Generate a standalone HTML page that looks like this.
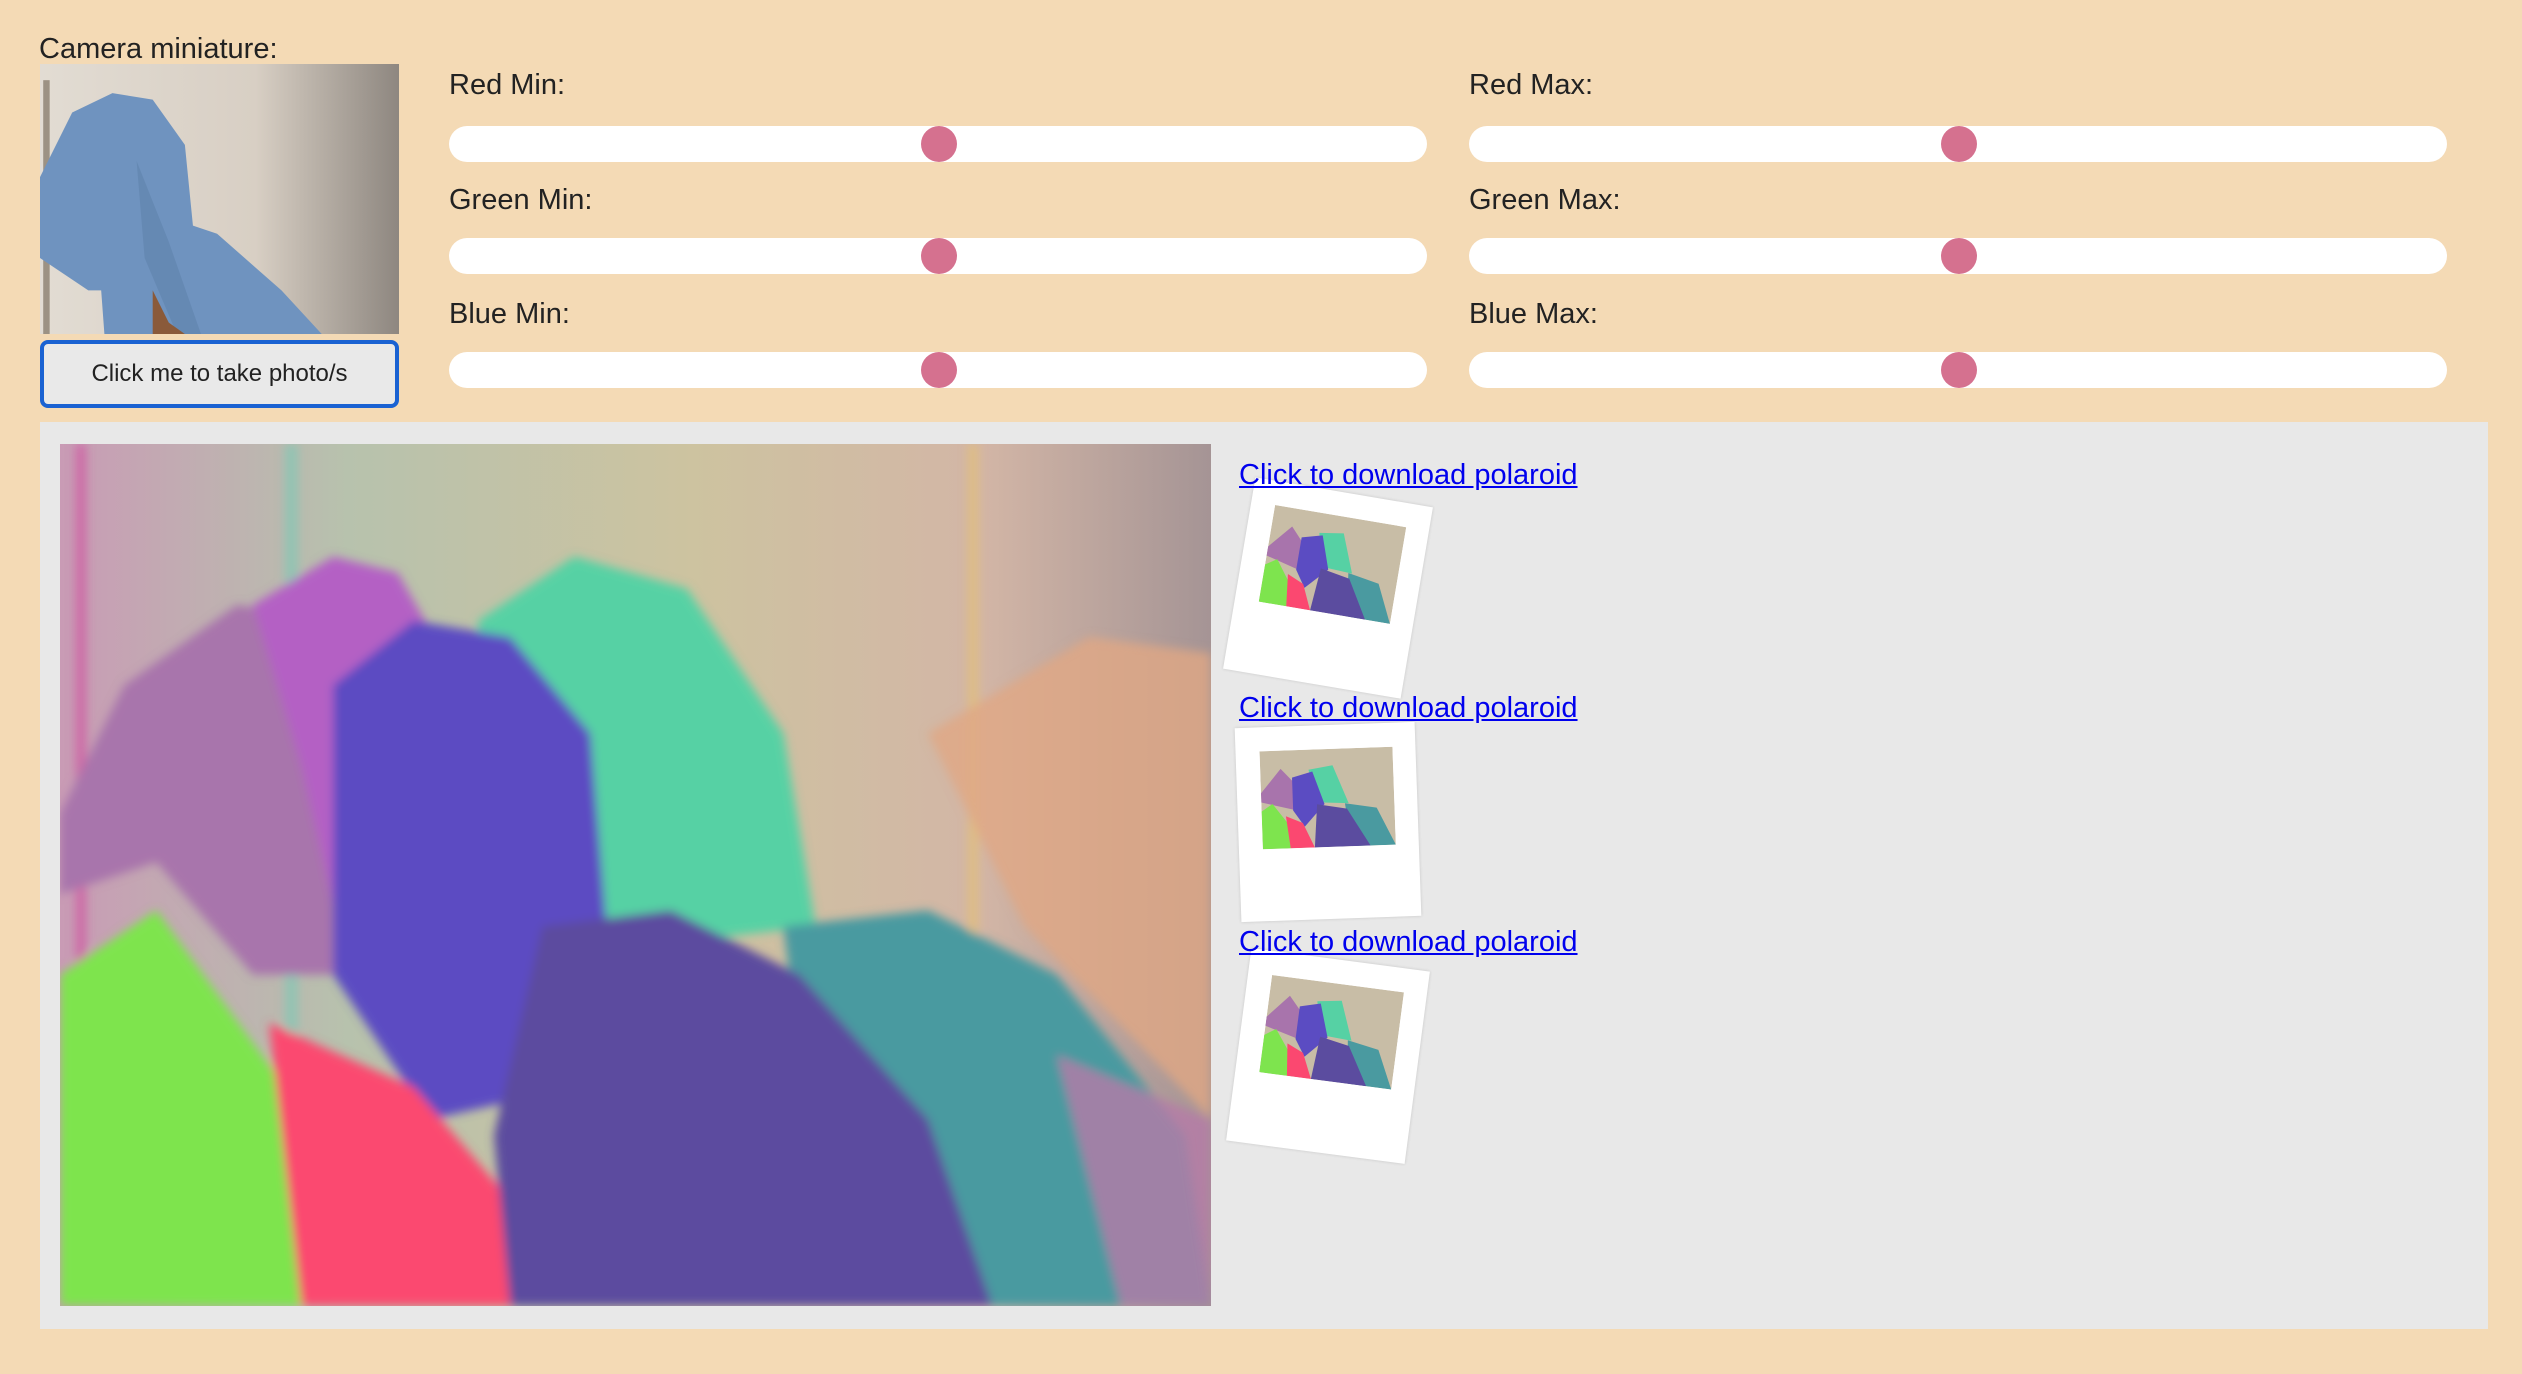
<!DOCTYPE html>
<html><head><meta charset="utf-8">
<style>
*{margin:0;padding:0;box-sizing:border-box}
html,body{width:2522px;height:1374px;overflow:hidden;background:#f4dab5;font-family:"Liberation Sans",Arial,sans-serif;color:#222}
.lbl{position:absolute;font-size:29px;line-height:29px;white-space:nowrap}
.track{position:absolute;height:36px;width:978px;background:#fff;border-radius:18px}
.thumb{position:absolute;width:36px;height:36px;border-radius:50%;background:#d5718f;top:0}
.thumbimg{position:absolute;left:40px;top:64px;width:359px;height:270px}
.btn{position:absolute;left:40px;top:340px;width:359px;height:68px;background:#e9e9e9;border:4px solid #1a62d2;border-radius:8px;font-size:24px;text-align:center;line-height:60px;color:#222}
.panel{position:absolute;left:40px;top:422px;width:2448px;height:907px;background:#e8e8e8}
.big{position:absolute;left:60px;top:444px;width:1151px;height:862px}
svg{display:block}
.link{position:absolute;left:1239px;font-size:29px;line-height:29px;color:#0000ee;text-decoration:underline;white-space:nowrap}
.pol{position:absolute;width:180px;height:194px;background:#fff;box-shadow:0 0 3px rgba(0,0,0,.15)}
.pol .in{position:absolute;left:24px;top:24px;width:133px;height:98px}
</style></head><body>
<div class="lbl" style="left:39px;top:35px">Camera miniature:</div>
<svg class="thumbimg" viewBox="0 0 223 167" preserveAspectRatio="none">
<defs><linearGradient id="w" x1="0" x2="1"><stop offset="0" stop-color="#e2dcd3"/><stop offset=".6" stop-color="#d8cfc4"/><stop offset="1" stop-color="#8e8780"/></linearGradient></defs>
<rect width="223" height="167" fill="url(#w)"/>
<rect x="2" y="10" width="4" height="157" fill="#9c9284"/>
<path d="M0,70 L20,30 L45,18 L70,22 L90,50 L95,100 L110,105 L150,140 L175,167 L40,167 L38,140 L30,140 L0,120Z" fill="#6f93bf"/>
<path d="M60,60 L80,110 L100,167 L85,167 L65,120Z" fill="#5f82ac" opacity=".6"/>
<path d="M70,140 L80,160 L90,167 L70,167Z" fill="#8a5a3a"/>
</svg>
<div class="btn">Click me to take photo/s</div>

<div class="lbl" style="left:449px;top:71px">Red Min:</div>
<div class="track" style="left:449px;top:126px"><div class="thumb" style="left:472px"></div></div>
<div class="lbl" style="left:1469px;top:71px">Red Max:</div>
<div class="track" style="left:1469px;top:126px"><div class="thumb" style="left:472px"></div></div>
<div class="lbl" style="left:449px;top:186px">Green Min:</div>
<div class="track" style="left:449px;top:238px"><div class="thumb" style="left:472px"></div></div>
<div class="lbl" style="left:1469px;top:186px">Green Max:</div>
<div class="track" style="left:1469px;top:238px"><div class="thumb" style="left:472px"></div></div>
<div class="lbl" style="left:449px;top:300px">Blue Min:</div>
<div class="track" style="left:449px;top:352px"><div class="thumb" style="left:472px"></div></div>
<div class="lbl" style="left:1469px;top:300px">Blue Max:</div>
<div class="track" style="left:1469px;top:352px"><div class="thumb" style="left:472px"></div></div>

<div class="panel"></div>
<svg class="big" viewBox="0 0 716 536" preserveAspectRatio="none">
<defs>
<linearGradient id="bg" x1="0" x2="1"><stop offset="0" stop-color="#c99bb5"/><stop offset=".25" stop-color="#b7c2ad"/><stop offset=".55" stop-color="#cdc3a0"/><stop offset=".8" stop-color="#d3b6a6"/><stop offset="1" stop-color="#a59495"/></linearGradient>
<filter id="b"><feGaussianBlur stdDeviation="3"/></filter>
</defs>
<rect width="716" height="536" fill="url(#bg)"/>
<g filter="url(#b)">
<rect x="140" y="0" width="8" height="536" fill="#7fc7b5" opacity=".7"/>
<rect x="10" y="0" width="6" height="536" fill="#d050a0" opacity=".7"/>
<rect x="565" y="0" width="6" height="536" fill="#e8c36a" opacity=".6"/>
<path d="M540,180 L640,120 L716,130 L716,420 L600,300Z" fill="#e0a884" opacity=".8"/>
<path d="M0,230 L40,150 L110,100 L170,110 L200,200 L190,330 L120,330 L60,260 L0,280Z" fill="#a874ac"/>
<path d="M120,100 L170,70 L210,80 L250,150 L240,300 L180,330 L150,200Z" fill="#b461c4"/>
<path d="M260,110 L320,70 L390,90 L450,180 L470,300 L380,310 L300,290 L270,200Z" fill="#56d1a4"/>
<path d="M170,150 L220,110 L280,120 L330,180 L340,300 L320,400 L230,420 L170,330Z" fill="#5b4cc2"/>
<path d="M0,330 L60,290 L140,400 L150,536 L0,536Z" fill="#7ee44e"/>
<path d="M130,360 L220,400 L280,470 L280,536 L150,536Z" fill="#fb4870"/>
<path d="M450,300 L540,290 L620,330 L700,430 L716,536 L480,536Z" fill="#4a9aa0"/>
<path d="M300,300 L380,290 L460,330 L540,420 L580,536 L280,536 L270,430Z" fill="#5b4c9f"/>
<path d="M620,380 L716,420 L716,536 L660,536Z" fill="#b57aa8" opacity=".8"/>
</g>
</svg>

<div class="pol" style="left:1238px;top:491px;transform:rotate(9.6deg)"><svg class="in" viewBox="0 0 716 536" preserveAspectRatio="none"><rect width="716" height="536" fill="#c8bda6"/><path d="M0,230 L110,100 L200,200 L190,330 L0,280Z" fill="#a874ac"/><path d="M260,110 L390,90 L470,300 L300,290Z" fill="#56d1a4"/><path d="M170,150 L280,120 L340,300 L230,420 L170,330Z" fill="#5b4cc2"/><path d="M0,330 L60,290 L140,400 L150,536 L0,536Z" fill="#7ee44e"/><path d="M130,360 L220,400 L280,536 L150,536Z" fill="#fb4870"/><path d="M450,300 L620,330 L716,536 L480,536Z" fill="#4a9aa0"/><path d="M300,300 L460,330 L580,536 L280,536Z" fill="#5b4c9f"/></svg></div>
<div class="link" style="top:461px">Click to download polaroid</div>
<div class="pol" style="left:1238px;top:725px;transform:rotate(-2deg)"><svg class="in" viewBox="0 0 716 536" preserveAspectRatio="none"><rect width="716" height="536" fill="#c8bda6"/><path d="M0,230 L110,100 L200,200 L190,330 L0,280Z" fill="#a874ac"/><path d="M260,110 L390,90 L470,300 L300,290Z" fill="#56d1a4"/><path d="M170,150 L280,120 L340,300 L230,420 L170,330Z" fill="#5b4cc2"/><path d="M0,330 L60,290 L140,400 L150,536 L0,536Z" fill="#7ee44e"/><path d="M130,360 L220,400 L280,536 L150,536Z" fill="#fb4870"/><path d="M450,300 L620,330 L716,536 L480,536Z" fill="#4a9aa0"/><path d="M300,300 L460,330 L580,536 L280,536Z" fill="#5b4c9f"/></svg></div>
<div class="link" style="top:694px">Click to download polaroid</div>
<div class="pol" style="left:1238px;top:959px;transform:rotate(7.5deg)"><svg class="in" viewBox="0 0 716 536" preserveAspectRatio="none"><rect width="716" height="536" fill="#c8bda6"/><path d="M0,230 L110,100 L200,200 L190,330 L0,280Z" fill="#a874ac"/><path d="M260,110 L390,90 L470,300 L300,290Z" fill="#56d1a4"/><path d="M170,150 L280,120 L340,300 L230,420 L170,330Z" fill="#5b4cc2"/><path d="M0,330 L60,290 L140,400 L150,536 L0,536Z" fill="#7ee44e"/><path d="M130,360 L220,400 L280,536 L150,536Z" fill="#fb4870"/><path d="M450,300 L620,330 L716,536 L480,536Z" fill="#4a9aa0"/><path d="M300,300 L460,330 L580,536 L280,536Z" fill="#5b4c9f"/></svg></div>
<div class="link" style="top:928px">Click to download polaroid</div>
</body></html>
